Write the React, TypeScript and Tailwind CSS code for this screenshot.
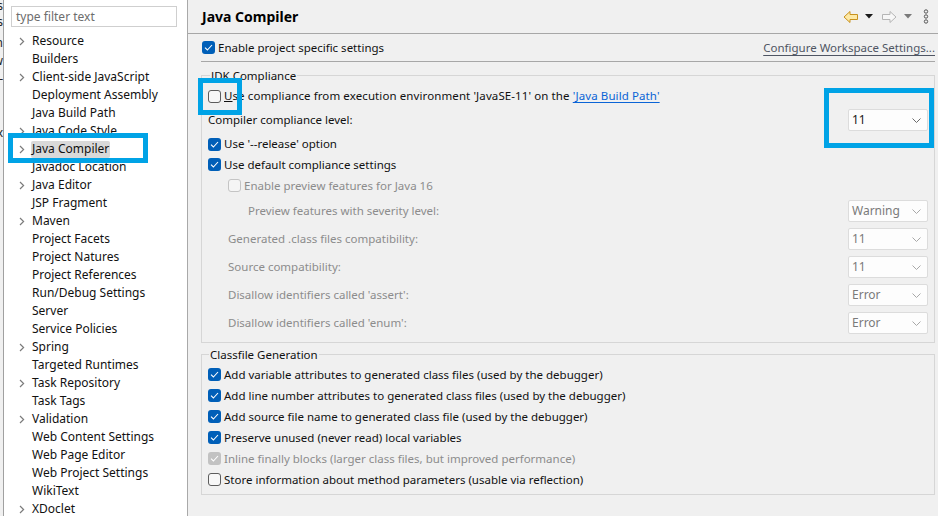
import React from 'react'

type TreeItem = { label: string; expandable?: boolean; selected?: boolean }

const treeItems: TreeItem[] = [
  { label: 'Resource', expandable: true },
  { label: 'Builders' },
  { label: 'Client-side JavaScript', expandable: true },
  { label: 'Deployment Assembly' },
  { label: 'Java Build Path' },
  { label: 'Java Code Style', expandable: true },
  { label: 'Java Compiler', expandable: true, selected: true },
  { label: 'Javadoc Location' },
  { label: 'Java Editor', expandable: true },
  { label: 'JSP Fragment' },
  { label: 'Maven', expandable: true },
  { label: 'Project Facets' },
  { label: 'Project Natures' },
  { label: 'Project References' },
  { label: 'Run/Debug Settings' },
  { label: 'Server' },
  { label: 'Service Policies' },
  { label: 'Spring', expandable: true },
  { label: 'Targeted Runtimes' },
  { label: 'Task Repository', expandable: true },
  { label: 'Task Tags' },
  { label: 'Validation', expandable: true },
  { label: 'Web Content Settings' },
  { label: 'Web Page Editor' },
  { label: 'Web Project Settings' },
  { label: 'WikiText' },
  { label: 'XDoclet', expandable: true },
]

const Checkbox = ({ checked, disabled }: { checked?: boolean; disabled?: boolean }) => {
  if (checked) {
    return (
      <span
        className={`flex h-[13px] w-[13px] shrink-0 items-center justify-center rounded-[3px] ${
          disabled ? 'bg-[#c2c2c2]' : 'bg-[#005fb8]'
        }`}
      >
        <svg width="9" height="7" viewBox="0 0 9 7">
          <path d="M1 3.6 L3.4 6 L8 1" fill="none" stroke="white" strokeWidth="1.1" />
        </svg>
      </span>
    )
  }
  return (
    <span
      className={`h-[13px] w-[13px] shrink-0 rounded-[3px] border ${
        disabled ? 'border-[#c4c4c4] bg-[#f5f5f5]' : 'border-[#5c5c5c] bg-[#f7f7f7]'
      }`}
    />
  )
}

const Dropdown = ({ value, disabled }: { value: string; disabled?: boolean }) => (
  <div className="flex h-[22px] w-[80px] items-center justify-between rounded-[2px] border border-[#dcdcdc] bg-[#fdfdfd] pl-[3px] pr-[6px] text-[12px]">
    <span className={disabled ? 'text-[#7a7a7a]' : 'text-[#1a1a1a]'}>{value}</span>
    <svg width="9" height="5" viewBox="0 0 9 5">
      <path d="M0.5 0.5 L4.5 4.5 L8.5 0.5" fill="none" stroke={disabled ? '#a8a8a8' : '#6a6a6a'} strokeWidth="1" />
    </svg>
  </div>
)

const CheckRow = ({
  checked,
  disabled,
  children,
  className = '',
}: {
  checked?: boolean
  disabled?: boolean
  children: React.ReactNode
  className?: string
}) => (
  <div className={`flex items-center gap-[3px] ${className}`}>
    <Checkbox checked={checked} disabled={disabled} />
    <span className={disabled ? 'text-[#8c8c8c]' : 'text-[#111]'}>{children}</span>
  </div>
)

const SettingRow = ({ label, value, indent }: { label: string; value: string; indent: string }) => (
  <div className={`flex h-[28px] items-center justify-between ${indent}`}>
    <span className="text-[#8c8c8c]">{label}</span>
    <Dropdown value={value} disabled />
  </div>
)

const Chevron = () => (
  <svg width="6" height="9" viewBox="0 0 6 9">
    <path d="M1 1 L4.6 4.5 L1 8" fill="none" stroke="#7c7c7c" strokeWidth="1.2" />
  </svg>
)

const App = () => {
  return (
    <div
      className="relative flex h-[516px] w-[938px] overflow-hidden bg-[#f0f0f0] text-[12px] leading-none text-[#111]"
      style={{ fontFamily: '"Noto Sans", "Liberation Sans", sans-serif' }}
    >
      {/* clipped neighbour view */}
      <div className="flex w-[4px] shrink-0 flex-col items-end overflow-hidden border-r border-[#a0a0a0] text-[#222]">
        <div className="mt-[-2px] flex h-[16px] w-[4px] items-center justify-end whitespace-nowrap">Projects</div>
        <div className="flex h-[16px] w-[4px] items-center justify-end whitespace-nowrap">Servers</div>
        <div className="mt-[4px] flex h-[18px] w-[4px] items-center justify-end whitespace-nowrap">Design</div>
        <div className="flex h-[18px] w-[4px] items-center justify-end whitespace-nowrap">View</div>
        <div className="flex h-[18px] w-[4px] items-center justify-end whitespace-nowrap">--</div>
        <div className="mt-[36px] flex h-[18px] w-[4px] items-center justify-end whitespace-nowrap">Box</div>
      </div>

      {/* left tree */}
      <div className="flex w-[184px] shrink-0 flex-col border-r border-[#a9a9a9] bg-white">
        <div className="pl-[7px] pr-[10px] pt-[6px]">
          <div className="flex h-[21px] items-center border border-[#cfcfcf] bg-white pl-[4px] text-[#6d6d6d]">
            type filter text
          </div>
        </div>
        <div className="mt-[5px] flex flex-col">
          {treeItems.map((item) => (
            <div key={item.label} className="flex h-[18px] items-center">
              <span className="flex w-[27px] justify-end pr-[6px]">{item.expandable && <Chevron />}</span>
              <span
                className={`flex h-[17px] items-center whitespace-nowrap px-[1px] ${
                  item.selected ? 'rounded-[2px] bg-[#d9d9d9]' : ''
                }`}
              >
                {item.label}
              </span>
            </div>
          ))}
        </div>
      </div>

      {/* right page */}
      <div className="flex min-w-0 flex-1 flex-col text-[11.5px]">
        <div className="flex h-[34px] shrink-0 items-center justify-between border-b border-[#a7a7a7] pl-[14px] pr-[9px]">
          <span className="text-[14px] font-bold text-black">Java Compiler</span>
          <div className="flex items-center">
            <svg width="16" height="14" viewBox="0 0 16 14">
              <path d="M1 7 L7 1.5 L7 4.5 L14.5 4.5 L14.5 9.5 L7 9.5 L7 12.5 Z" fill="#fde9a6" stroke="#c8921e" strokeWidth="1" />
            </svg>
            <svg className="ml-[6px]" width="8" height="5" viewBox="0 0 8 5">
              <path d="M0 0 L8 0 L4 4.5 Z" fill="#1a1a1a" />
            </svg>
            <svg className="ml-[8px]" width="16" height="14" viewBox="0 0 16 14">
              <path d="M15 7 L9 1.5 L9 4.5 L1.5 4.5 L1.5 9.5 L9 9.5 L9 12.5 Z" fill="#f7f7f7" stroke="#b5b5b5" strokeWidth="1" />
            </svg>
            <svg className="ml-[7px]" width="8" height="5" viewBox="0 0 8 5">
              <path d="M0 0 L8 0 L4 4.5 Z" fill="#7a7a7a" />
            </svg>
            <svg className="ml-[11px]" width="6" height="15" viewBox="0 0 6 15">
              <circle cx="3" cy="2.5" r="1.7" fill="none" stroke="#555" strokeWidth="1" />
              <circle cx="3" cy="7.5" r="1.7" fill="none" stroke="#555" strokeWidth="1" />
              <circle cx="3" cy="12.5" r="1.7" fill="none" stroke="#555" strokeWidth="1" />
            </svg>
          </div>
        </div>

        <div className="flex flex-col pl-[13px] pr-[3px]">
          <div className="flex h-[28px] items-center justify-between border-b border-[#a7a7a7] pl-[1px]">
            <CheckRow checked>Enable project specific settings</CheckRow>
            <span className="text-[#4f5563] underline underline-offset-[3px]">Configure Workspace Settings...</span>
          </div>

          <fieldset className="mt-[5px] border border-[#d6d6d6] pb-[5px] pl-[6px] pr-[6px]">
            <legend className="ml-[2px] px-[1px] leading-[17px] text-[#111]">JDK Compliance</legend>
            <CheckRow className="mt-[2px] h-[20px]">
              <span className="tracking-[0.1px]">
                <span className="underline">U</span>se compliance from execution environment 'JavaSE-11' on the{' '}
                <span className="text-[#0a64d6] underline underline-offset-[2px]">'Java Build Path'</span>
              </span>
            </CheckRow>
            <div className="mt-[2px] flex h-[24px] items-center justify-between">
              <span>Compiler compliance level:</span>
              <Dropdown value="11" />
            </div>
            <CheckRow checked className="mt-[2px] h-[20px]">
              Use '--release' option
            </CheckRow>
            <CheckRow checked className="h-[21px]">
              Use default compliance settings
            </CheckRow>
            <CheckRow disabled className="h-[21px] pl-[20px]">
              Enable preview features for Java 16
            </CheckRow>
            <div className="mt-[1px]">
              <SettingRow label="Preview features with severity level:" value="Warning" indent="pl-[40px]" />
              <SettingRow label="Generated .class files compatibility:" value="11" indent="pl-[20px]" />
              <SettingRow label="Source compatibility:" value="11" indent="pl-[20px]" />
              <SettingRow label="Disallow identifiers called 'assert':" value="Error" indent="pl-[20px]" />
              <SettingRow label="Disallow identifiers called 'enum':" value="Error" indent="pl-[20px]" />
            </div>
          </fieldset>

          <fieldset className="mt-[3px] border border-[#d6d6d6] pb-[4px] pl-[6px] pr-[6px]">
            <legend className="ml-[1px] px-[1px] leading-[17px] text-[#111]">Classfile Generation</legend>
            <CheckRow checked className="mt-[1px] h-[21px]">
              Add variable attributes to generated class files (used by the debugger)
            </CheckRow>
            <CheckRow checked className="h-[21px]">
              Add line number attributes to generated class files (used by the debugger)
            </CheckRow>
            <CheckRow checked className="h-[21px]">
              Add source file name to generated class file (used by the debugger)
            </CheckRow>
            <CheckRow checked className="h-[21px]">
              Preserve unused (never read) local variables
            </CheckRow>
            <CheckRow checked disabled className="h-[21px]">
              Inline finally blocks (larger class files, but improved performance)
            </CheckRow>
            <CheckRow className="h-[21px]">
              Store information about method parameters (usable via reflection)
            </CheckRow>
          </fieldset>
        </div>
      </div>

      {/* annotation highlights */}
      <div className="absolute left-[8px] top-[133px] h-[30px] w-[140px] border-[5px] border-[#00a3e6]" />
      <div className="absolute left-[198px] top-[78px] h-[37px] w-[44px] border-[5px] border-[#00a3e6]" />
      <div className="absolute left-[824px] top-[88px] h-[60px] w-[110px] border-[5px] border-[#00a3e6]" />
    </div>
  )
}

export default App
